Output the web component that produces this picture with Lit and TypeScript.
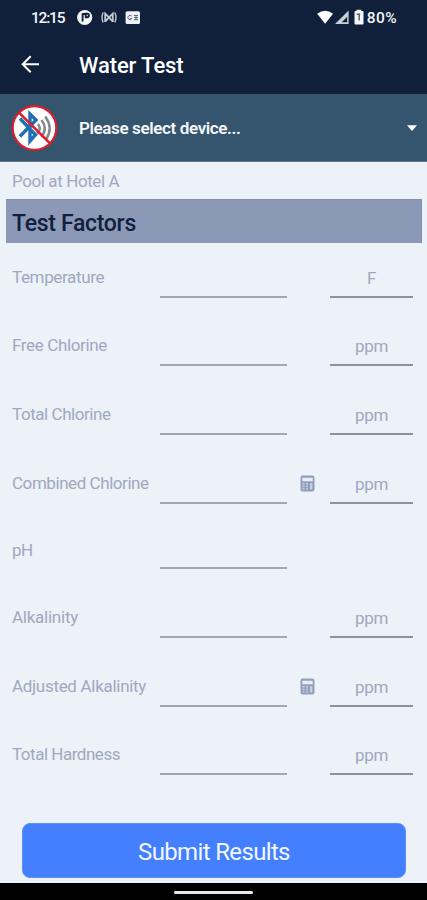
import { LitElement, html, css, nothing } from "lit";
import { customElement } from "lit/decorators.js";
import { styleMap } from "lit/directives/style-map.js";

interface Factor {
  label: string;
  unit?: string;
  calc?: boolean;
  height: number;
  spacing: number;
}

const factors: Factor[] = [
  { label: "Temperature", unit: "F", height: 55, spacing: -0.36 },
  { label: "Free Chlorine", unit: "ppm", height: 68, spacing: -0.36 },
  { label: "Total Chlorine", unit: "ppm", height: 69, spacing: -0.44 },
  { label: "Combined Chlorine", unit: "ppm", calc: true, height: 69, spacing: -0.44 },
  { label: "pH", height: 65, spacing: -0.6 },
  { label: "Alkalinity", unit: "ppm", height: 69, spacing: -0.25 },
  { label: "Adjusted Alkalinity", unit: "ppm", calc: true, height: 69, spacing: -0.3 },
  { label: "Total Hardness", unit: "ppm", height: 68, spacing: -0.48 },
];

@customElement("app-root")
export class AppRoot extends LitElement {
  static styles = css`
    :host {
      display: flex;
      flex-direction: column;
      width: 427px;
      height: 900px;
      overflow: hidden;
      background: #edf1f8;
      color: #a0a8bf;
      font-family: Roboto, "Liberation Sans", sans-serif;
    }
    * { box-sizing: border-box; }
    svg { display: block; flex: none; }
    .status {
      display: flex;
      align-items: center;
      height: 35px;
      padding: 0 30px 0 31px;
      background: #10203a;
      color: #f3f5f8;
      font-size: 15.5px;
      font-weight: 500;
    }
    .clock { width: 46px; padding-top: 1px; letter-spacing: -1.2px; }
    .right { margin-left: auto; display: flex; align-items: center; }
    .pct { margin-left: 3px; padding-top: 1px; font-size: 15.5px; letter-spacing: 0.4px; }
    .bar {
      display: flex;
      align-items: center;
      height: 59px;
      padding-left: 20px;
      background: #10203a;
      color: #fff;
    }
    .title { margin-left: 38px; padding-top: 1px; font-size: 22px; font-weight: 500; letter-spacing: -0.1px; }
    .device {
      display: flex;
      align-items: center;
      height: 68px;
      padding: 0 10px 0 11px;
      background: #35556f;
      color: #f5f8fb;
      font-size: 17px;
      font-weight: 600;
      border-bottom: 1px solid #68798c;
    }
    .device .name { margin-left: 20px; letter-spacing: -0.37px; }
    .caret { margin-left: auto; }
    .pool { height: 37px; padding: 1px 12px 0; line-height: 36px; font-size: 17px; letter-spacing: -0.4px; }
    .heading {
      height: 44px;
      margin: 0 5px 0 6px;
      padding: 2px 6px 0;
      line-height: 44px;
      background: #8c99b6;
      border: solid #8290ae;
      border-width: 1px 1px 0 0;
      color: #10203f;
      font-size: 23px;
      font-weight: 500;
      letter-spacing: -0.3px;
    }
    .row {
      display: grid;
      grid-template-columns: 148px 127px 43px 83px;
      align-items: end;
      padding-left: 12px;
      font-size: 17px;
    }
    .label, .unit { line-height: 20px; white-space: nowrap; }
    .label { padding-bottom: 11px; }
    .label.solo { padding-bottom: 9px; }
    .field { height: 38px; border-bottom: 2px solid #a2a6af; }
    .unit { padding-bottom: 8px; text-align: center; letter-spacing: -0.3px; border-bottom: 2px solid #8e929c; }
    .calc { padding: 0 0 12px 13px; }
    .submit {
      height: 55px;
      margin: 48px 21px 0 22px;
      border: 1px solid #5c90fb;
      border-radius: 8px;
      background: #437fff;
      color: #f2f6ff;
      text-align: center;
      line-height: 56px;
      font-size: 24px;
      letter-spacing: -0.65px;
    }
    .nav {
      display: flex;
      justify-content: center;
      height: 17px;
      margin-top: auto;
      padding-top: 8px;
      background: #000;
    }
    .pill { width: 79px; height: 3px; border-radius: 2px; background: #e8e8e8; }
  `;

  private calcIcon() {
    return html`<svg width="15" height="17" viewBox="0 0 15 17">
      <rect x="0.5" y="0.5" width="14" height="16" rx="2.2" fill="#929fba" />
      <rect x="2.3" y="2.7" width="10.4" height="3.6" rx="0.5" fill="#e8edf6" />
      <g fill="#c6cfdf">
        <rect x="2.5" y="8" width="2" height="1.6" /><rect x="6" y="8" width="2" height="1.6" /><rect x="10" y="8" width="2.4" height="6.5" rx="0.8" />
        <rect x="2.5" y="10.6" width="2" height="1.5" /><rect x="6" y="10.6" width="2" height="1.5" />
        <rect x="2.5" y="13.2" width="2" height="1.4" /><rect x="6" y="13.2" width="2" height="1.4" />
      </g>
    </svg>`;
  }

  render() {
    return html`
      <div class="status">
        <span class="clock">12:15</span>
        <svg width="64" height="17" viewBox="0 0 64 17">
          <circle cx="7.7" cy="8.5" r="7.6" fill="#f3f5f8" />
          <path d="M5.6 4.4v8.2M8.7 9.2V4.8h1.5a1.7 1.7 0 0 1 0 3.4H8.7M5 5h4" fill="none" stroke="#10203a" stroke-width="1.9" />
          <g fill="none" stroke="#c3cad4" stroke-width="1.4">
            <path d="M26.2 3.5Q23.8 8.4 26.2 13.4M37.8 3.5Q40.2 8.4 37.8 13.4" />
            <path d="M28.2 13V4.6L32 8.4l3.8-3.8V13M28.2 12.6L32 8.4l3.8 4.2" stroke-width="1.8" />
          </g>
          <rect x="48.6" y="2.2" width="14.4" height="12.8" rx="1.6" fill="#eef1f5" />
          <g fill="none" stroke="#5b677a" stroke-width="1">
            <path d="M54.6 7.1a2.1 2.1 0 1 0 .2 2.5H53.2M57 6.5h4M57 8.6h4M57 10.7h4M59 6v5" />
          </g>
        </svg>
        <div class="right">
          <svg width="47" height="17" viewBox="0 0 47 17">
            <path d="M0.2 4.7Q8 -1.2 16 4.7L8.1 14.7z" fill="#fff" />
            <path d="M18 15L31.6 1.6V15z" fill="#c8ced7" />
            <path d="M24.8 13.3L30.2 7.8v5.5z" fill="#10203a" />
            <path d="M39.5 2V.8h4.7V2h1.3q1 0 1 1v11.4q0 1-1 1h-7q-1 0-1-1V3q0-1 1-1z" fill="#f3f5f8" />
            <path d="M39.7 5.3h3.5M42.2 5.5v6" fill="none" stroke="#4f5b6d" stroke-width="1.4" />
          </svg>
          <span class="pct">80%</span>
        </div>
      </div>
      <div class="bar">
        <svg width="21" height="20" viewBox="0 0 21 20" fill="none" stroke="#fff" stroke-width="2">
          <path d="M19 9.3H3M10.7 1.3l-8 8 8 8" />
        </svg>
        <span class="title">Water Test</span>
      </div>
      <div class="device">
        <svg width="48" height="48" viewBox="0 0 48 48" fill="none">
          <circle cx="23.5" cy="24" r="21.8" fill="#fff" stroke="#d91f2b" stroke-width="2.2" />
          <path d="M9 14.5L24.5 30.8 19 37V10l6 6L8.8 32.5" stroke="#1f6fb5" stroke-width="3.4" />
          <path d="M27 20q4 5-1 9.5M30.5 16q6.5 8.5 0 17M34.2 12.5q8.5 11.5 1 22.5" stroke="#85898f" stroke-width="2.5" />
          <path d="M8 8.6L39 39.4" stroke="#d91f2b" stroke-width="2.6" />
        </svg>
        <span class="name">Please select device...</span>
        <svg class="caret" width="10" height="6" viewBox="0 0 10 6"><path d="M0 .3h10L5 6z" fill="#fff" /></svg>
      </div>
      <div class="pool">Pool at Hotel A</div>
      <div class="heading">Test Factors</div>
      ${factors.map(
        (f) => html`<div class="row" style=${styleMap({ height: `${f.height}px` })}>
          <span class="label ${f.unit ? "" : "solo"}" style=${styleMap({ letterSpacing: `${f.spacing}px` })}>${f.label}</span>
          <span class="field"></span>
          <span class="calc">${f.calc ? this.calcIcon() : nothing}</span>
          ${f.unit ? html`<span class="unit">${f.unit}</span>` : nothing}
        </div>`
      )}
      <div class="submit">Submit Results</div>
      <div class="nav"><span class="pill"></span></div>
    `;
  }
}
